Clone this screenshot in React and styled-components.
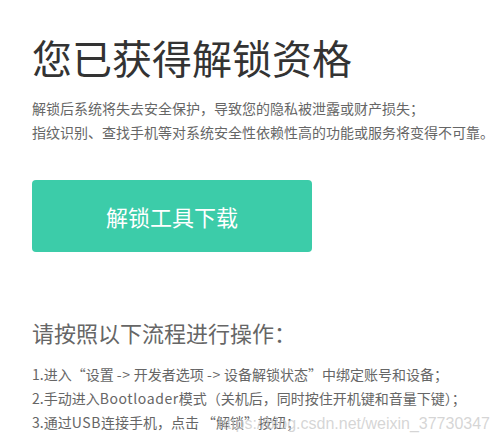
import React from 'react';
import styled, { createGlobalStyle } from 'styled-components';

const GlobalStyle = createGlobalStyle`
  html, body {
    margin: 0;
    padding: 0;
    background: #ffffff;
  }
  body {
    font-family: "Noto Sans CJK SC", "Noto Sans", sans-serif;
  }
`;

const Page = styled.div`
  position: relative;
  width: 500px;
  height: 437px;
  overflow: hidden;
  box-sizing: border-box;
  padding: 33px 0 0 32px;
`;

const Title = styled.h1`
  margin: 0;
  font-size: 40px;
  line-height: 48px;
  font-weight: 400;
  color: #333333;
`;

const Notice = styled.p`
  margin: 15px 0 0;
  font-size: 14px;
  line-height: 24px;
  color: #666666;
  white-space: nowrap;
`;

const DownloadButton = styled.button`
  display: flex;
  align-items: center;
  justify-content: center;
  margin-top: 36px;
  width: 280px;
  height: 72px;
  padding: 0;
  border: none;
  border-radius: 4px;
  background: #3ccca9;
  color: #ffffff;
  font-family: inherit;
  font-size: 22px;
  cursor: pointer;
`;

const StepsTitle = styled.h2`
  margin: 65px 0 0;
  font-size: 22px;
  line-height: 30px;
  font-weight: 400;
  color: #666666;
`;

const Steps = styled.ol`
  margin: 15px 0 0;
  padding: 0;
  list-style: none;
`;

const Step = styled.li`
  font-size: 14px;
  line-height: 24px;
  color: #666666;
  white-space: nowrap;
`;

const Latin = styled.span`
  letter-spacing: 0.6px;
`;

const Watermark = styled.span`
  position: absolute;
  right: 10px;
  bottom: 4px;
  font-family: "Liberation Sans", Arial, sans-serif;
  font-size: 16px;
  color: rgba(200, 200, 200, 0.75);
  pointer-events: none;
`;

const App = () => (
  <>
    <GlobalStyle />
    <Page>
      <Title>您已获得解锁资格</Title>
      <Notice>
        解锁后系统将失去安全保护，导致您的隐私被泄露或财产损失；
        <br />
        指纹识别、查找手机等对系统安全性依赖性高的功能或服务将变得不可靠。
      </Notice>
      <DownloadButton>解锁工具下载</DownloadButton>
      <StepsTitle>请按照以下流程进行操作：</StepsTitle>
      <Steps>
        <Step>1.进入“设置 <Latin>-&gt;</Latin> 开发者选项 <Latin>-&gt;</Latin> 设备解锁状态”中绑定账号和设备；</Step>
        <Step>2.手动进入<Latin>Bootloader</Latin>模式（关机后，同时按住开机键和音量下键）；</Step>
        <Step>3.通过<Latin>USB</Latin>连接手机，点击 “解锁”按钮；</Step>
      </Steps>
      <Watermark>https://blog.csdn.net/weixin_37730347</Watermark>
    </Page>
  </>
);

export default App;
